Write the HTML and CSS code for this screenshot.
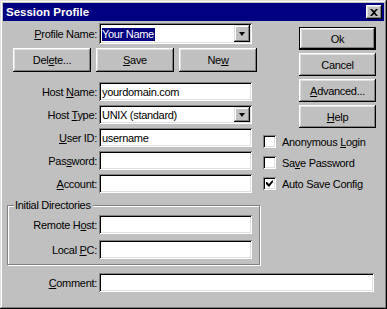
FILE: index.html
```html
<!DOCTYPE html>
<html lang="en">
<head>
  <meta charset="UTF-8">
  <title>Session Profile</title>
  <link rel="stylesheet" href="styles.css">
</head>
<body>

<div class="window">
  <div class="titlebar">
    <span class="title">Session Profile</span>
    <span class="close">
      <svg width="8" height="7" viewBox="0 0 8 7"><path d="M0 0h2l2 2 2-2h2L5 3.5 8 7H6L4 5 2 7H0l3-3.5z" fill="#000"/></svg>
    </span>
  </div>

  <div class="content">
    <div class="left">
      <div class="row row-combo">
        <span class="lbl"><u>P</u>rofile Name:</span>
        <div class="field combo">
          <span class="val"><span class="sel">Your Name</span></span>
          <span class="drop"><i class="arrow"></i></span>
        </div>
      </div>

      <div class="btn-row">
        <button class="btn">Del<u>e</u>te...</button>
        <button class="btn"><u>S</u>ave</button>
        <button class="btn">Ne<u>w</u></button>
      </div>

      <div class="row first">
        <span class="lbl">Host <u>N</u>ame:</span>
        <div class="field"><span class="val">yourdomain.com</span></div>
      </div>
      <div class="row">
        <span class="lbl">Host <u>T</u>ype:</span>
        <div class="field combo">
          <span class="val">UNIX (standard)</span>
          <span class="drop"><i class="arrow"></i></span>
        </div>
      </div>
      <div class="row">
        <span class="lbl"><u>U</u>ser ID:</span>
        <div class="field"><span class="val">username</span></div>
      </div>
      <div class="row">
        <span class="lbl">Pas<u>s</u>word:</span>
        <div class="field"></div>
      </div>
      <div class="row">
        <span class="lbl"><u>A</u>ccount:</span>
        <div class="field"></div>
      </div>

      <div class="group">
        <span class="legend">Initial Directories</span>
        <div class="row">
          <span class="lbl">Remote H<u>o</u>st:</span>
          <div class="field"></div>
        </div>
        <div class="row gap">
          <span class="lbl">Local <u>P</u>C:</span>
          <div class="field"></div>
        </div>
      </div>
    </div>

    <div class="right">
      <button class="btn side default">Ok</button>
      <button class="btn side">Cancel</button>
      <button class="btn side"><u>A</u>dvanced...</button>
      <button class="btn side"><u>H</u>elp</button>

      <div class="checks">
        <div class="check"><span class="box"></span><span>Anonymous <u>L</u>ogin</span></div>
        <div class="check"><span class="box"></span><span>Sa<u>v</u>e Password</span></div>
        <div class="check">
          <span class="box"><svg width="7" height="7" viewBox="0 0 7 7"><path d="M0 2h1l2 2 3-3.5h1v1.5L3 7 0 4z" fill="#000"/></svg></span><span>Auto Save Config</span>
        </div>
      </div>
    </div>
  </div>

  <div class="row comment">
    <span class="lbl"><u>C</u>omment:</span>
    <div class="field long"></div>
  </div>
</div>

</body>
</html>
```

FILE: styles.css
```css
body {
  margin: 0;
  font-family: "Liberation Sans", Arial, sans-serif;
  font-size: 11px;
  letter-spacing: -0.3px;
  color: #000;
}
u {
  text-decoration: underline;
  text-underline-offset: 1px;
}
.window {
  box-sizing: border-box;
  width: 387px;
  height: 309px;
  padding: 3px;
  background: #c0c0c0;
  box-shadow: inset -1px -1px #000, inset 1px 1px #dfdfdf,
              inset -2px -2px #808080, inset 2px 2px #fff;
}
.titlebar {
  height: 18px;
  background: #000080;
  color: #fff;
  display: flex;
  align-items: center;
  justify-content: space-between;
  padding: 0 2px 0 3px;
}
.title {
  font-weight: bold;
  font-size: 11.5px;
  letter-spacing: 0;
}
.close {
  width: 16px;
  height: 14px;
  background: #c0c0c0;
  display: flex;
  align-items: center;
  justify-content: center;
  box-shadow: inset -1px -1px #000, inset 1px 1px #fff,
              inset -2px -2px #808080, inset 2px 2px #dfdfdf;
}
.content {
  display: flex;
  padding: 2px 0 0 4px;
}
.left {
  width: 253px;
}
.right {
  margin-left: 2px;
  padding-top: 4px;
  display: flex;
  flex-direction: column;
}

/* label + field rows */
.row {
  display: flex;
  align-items: center;
  height: 19px;
  margin-top: 4px;
}
.row.first {
  margin-top: 10px;
}
.row-combo {
  height: 21px;
  margin-top: 0;
}
.lbl {
  width: 90px;
  padding-right: 2px;
  text-align: right;
  white-space: nowrap;
}
.field {
  box-sizing: border-box;
  width: 153px;
  height: 100%;
  background: #fff;
  display: flex;
  align-items: center;
  padding: 2px;
  box-shadow: inset 1px 1px #808080, inset -1px -1px #fff,
              inset 2px 2px #000, inset -2px -2px #dfdfdf;
}
.field.long {
  width: 275px;
}
.val {
  flex: 1;
  padding-left: 1px;
  white-space: nowrap;
}
.sel {
  background: #000080;
  color: #fff;
  padding: 0 1px 1px 0;
}
.drop {
  width: 16px;
  height: 100%;
  background: #c0c0c0;
  display: flex;
  align-items: center;
  justify-content: center;
  box-shadow: inset -1px -1px #000, inset 1px 1px #dfdfdf,
              inset -2px -2px #808080, inset 2px 2px #fff;
}
.arrow {
  width: 0;
  height: 0;
  border-left: 3.5px solid transparent;
  border-right: 3.5px solid transparent;
  border-top: 4px solid #000;
  margin-top: 1px;
}

/* buttons */
.btn {
  box-sizing: border-box;
  height: 24px;
  width: 78px;
  padding: 0;
  border: none;
  background: #c0c0c0;
  font: inherit;
  letter-spacing: inherit;
  color: #000;
  box-shadow: inset -1px -1px #000, inset 1px 1px #fff,
              inset -2px -2px #808080, inset 2px 2px #dfdfdf;
}
.btn-row {
  display: flex;
  gap: 5px;
  margin-top: 4px;
  padding-left: 6px;
}
.btn.side {
  width: 77px;
  height: 23px;
  margin: 0 0 3px 37px;
}
.btn.default {
  border: 1px solid #000;
}

/* group box */
.group {
  position: relative;
  margin-top: 12px;
  padding: 9px 0 5px;
  border: 1px solid #808080;
  box-shadow: inset 1px 1px #fff, 1px 1px #fff;
}
.group .row {
  margin-top: 0;
}
.group .row.gap {
  margin-top: 6px;
}
.group .lbl {
  width: 89px;
}
.legend {
  position: absolute;
  top: -7px;
  left: 6px;
  padding: 0 2px 0 1px;
  background: #c0c0c0;
}

/* check boxes */
.checks {
  padding-left: 1px;
}
.check {
  display: flex;
  align-items: center;
  height: 21px;
  white-space: nowrap;
}
.box {
  box-sizing: border-box;
  width: 13px;
  height: 13px;
  margin-right: 6px;
  background: #fff;
  display: flex;
  align-items: center;
  justify-content: center;
  box-shadow: inset 1px 1px #808080, inset -1px -1px #fff,
              inset 2px 2px #000, inset -2px -2px #dfdfdf;
}

.comment {
  margin-top: 8px;
  padding-left: 4px;
}
```
